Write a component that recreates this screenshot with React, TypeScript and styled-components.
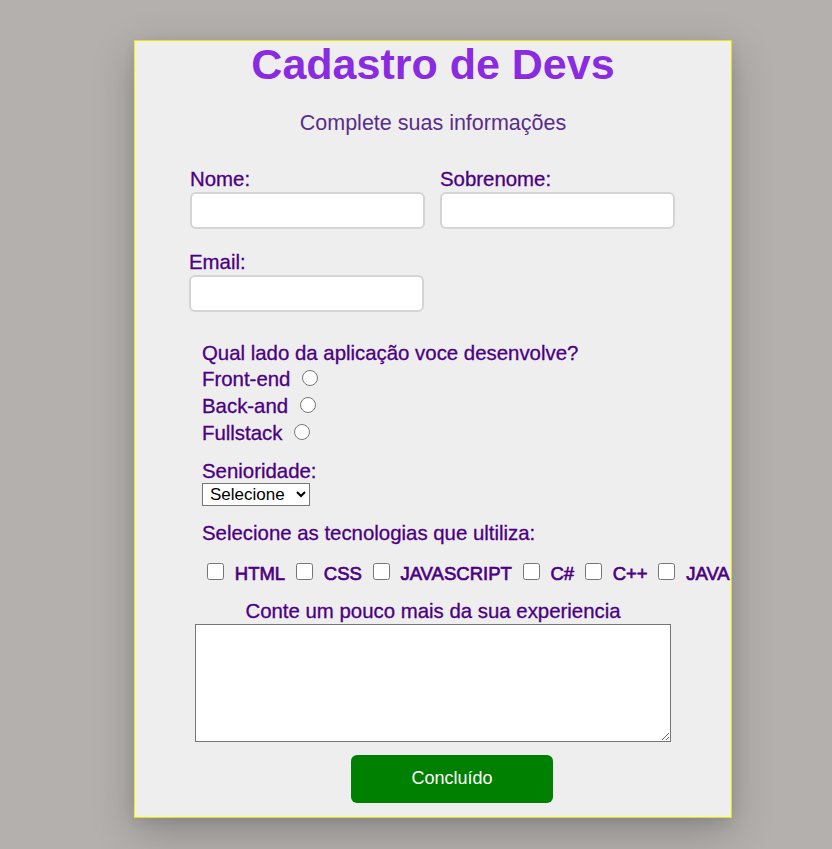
import React from "react";
import styled, { createGlobalStyle } from "styled-components";

const GlobalStyle = createGlobalStyle`
  html, body {
    margin: 0;
    padding: 0;
    background: #b3b0ae;
    font-family: "Liberation Sans", Arial, sans-serif;
  }
`;

const Page = styled.div`
  padding: 40px 0 31px 134px;
`;

const Card = styled.form`
  width: 598px;
  box-sizing: border-box;
  background: #eeeeee;
  border: 1px solid #e4e400;
  border-left: 1.5px solid #f2f200;
  box-shadow: 0 14px 40px rgba(0, 0, 0, 0.22), 0 4px 12px rgba(0, 0, 0, 0.08);
  display: flex;
  flex-direction: column;
  padding: 0 0 14px 0;
  overflow: hidden;
`;

const Title = styled.h1`
  margin: 0;
  text-align: center;
  font-size: 43px;
  line-height: 47px;
  font-weight: 700;
  color: #8a2be2;
`;

const Subtitle = styled.p`
  margin: 23px 0 0;
  text-align: center;
  font-size: 21.5px;
  line-height: 25px;
  color: #5a2d8a;
`;

const Label = styled.label`
  display: block;
  font-size: 20.4px;
  line-height: 23px;
  color: #4b0082;
  -webkit-text-stroke: 0.3px #4b0082;
  white-space: nowrap;
`;

const NameRow = styled.div`
  margin-top: 32px;
  padding-left: 55px;
  display: flex;
  gap: 15px;
`;

const Field = styled.div<{ $offset?: number; $top?: number }>`
  display: flex;
  flex-direction: column;
  gap: 1px;
  margin-left: ${(p) => p.$offset ?? 0}px;
  margin-top: ${(p) => p.$top ?? 0}px;
`;

const TextInput = styled.input`
  width: 235px;
  height: 37px;
  box-sizing: border-box;
  border: 2px solid #d4d4d4;
  border-radius: 6px;
  background: #fff;
  outline: none;
`;

const Section = styled.div`
  padding-left: 67px;
  display: flex;
  flex-direction: column;
  align-items: flex-start;
`;

const Line = styled.div<{ $top?: number }>`
  margin-top: ${(p) => p.$top ?? 0}px;
  font-size: 20.4px;
  line-height: 26.7px;
  color: #4b0082;
  -webkit-text-stroke: 0.3px #4b0082;
  white-space: nowrap;
`;

const Radio = styled.input`
  width: 16px;
  height: 16px;
  margin: 0 0 0 6px;
  vertical-align: baseline;
`;

const SectionLabel = styled(Label)<{ $top: number }>`
  margin-top: ${(p) => p.$top}px;
`;

const Select = styled.select`
  width: 108px;
  height: 23px;
  box-sizing: border-box;
  font-family: Arial, "Liberation Sans", sans-serif;
  font-size: 17px;
  color: #000;
  background: #fff;
  border: 1px solid #767676;
  border-radius: 0;
  padding: 0 0 0 3px;
`;

const TechRow = styled.div`
  margin-top: 17px;
  padding-left: 5px;
  display: flex;
  align-items: baseline;
  gap: 10.8px;
  white-space: nowrap;
  line-height: 23px;
`;

const Check = styled.input`
  width: 17px;
  height: 17px;
  margin: 0;
  flex: none;
`;

const TechName = styled.span`
  font-size: 18.5px;
  color: #4b0082;
  -webkit-text-stroke: 0.65px #4b0082;
  flex: none;
`;

const CenterLabel = styled(Label)`
  margin-top: 15px;
  text-align: center;
`;

const TextArea = styled.textarea`
  align-self: center;
  margin-top: 1px;
  width: 476px;
  height: 118px;
  box-sizing: border-box;
  border: 1px solid #767676;
  background: #fff;
`;

const SubmitButton = styled.button`
  align-self: center;
  margin: 13px 0 0 38px;
  width: 202px;
  height: 48px;
  border: none;
  border-radius: 6px;
  background: #008000;
  color: #fff;
  font-family: "Liberation Sans", Arial, sans-serif;
  font-size: 18px;
`;

const radios = ["Front-end", "Back-and", "Fullstack"];
const techs = ["HTML", "CSS", "JAVASCRIPT", "C#", "C++", "JAVA"];

export default function App() {
  return (
    <>
      <GlobalStyle />
      <Page>
        <Card onSubmit={(e) => e.preventDefault()}>
          <Title>Cadastro de Devs</Title>
          <Subtitle>Complete suas informações</Subtitle>
          <NameRow>
            <Field>
              <Label htmlFor="nome">Nome:</Label>
              <TextInput id="nome" type="text" />
            </Field>
            <Field>
              <Label htmlFor="sobrenome">Sobrenome:</Label>
              <TextInput id="sobrenome" type="text" />
            </Field>
          </NameRow>
          <Field $offset={54} $top={22}>
            <Label htmlFor="email">Email:</Label>
            <TextInput id="email" type="email" />
          </Field>
          <Section>
            <Line $top={27.7}>Qual lado da aplicação voce desenvolve?</Line>
            {radios.map((r) => (
              <Line key={r}>
                {r} <Radio type="radio" name="lado" value={r} />
              </Line>
            ))}
            <SectionLabel $top={13} htmlFor="senioridade">
              Senioridade:
            </SectionLabel>
            <Select id="senioridade" defaultValue="">
              <option value="">Selecione</option>
              <option value="junior">Júnior</option>
              <option value="pleno">Pleno</option>
              <option value="senior">Sênior</option>
            </Select>
            <SectionLabel $top={16}>Selecione as tecnologias que ultiliza:</SectionLabel>
          </Section>
          <Section>
            <TechRow>
              {techs.map((t) => (
                <React.Fragment key={t}>
                  <Check type="checkbox" value={t} />
                  <TechName>{t}</TechName>
                </React.Fragment>
              ))}
            </TechRow>
          </Section>
          <CenterLabel htmlFor="exp">Conte um pouco mais da sua experiencia</CenterLabel>
          <TextArea id="exp" />
          <SubmitButton type="submit">Concluído</SubmitButton>
        </Card>
      </Page>
    </>
  );
}
